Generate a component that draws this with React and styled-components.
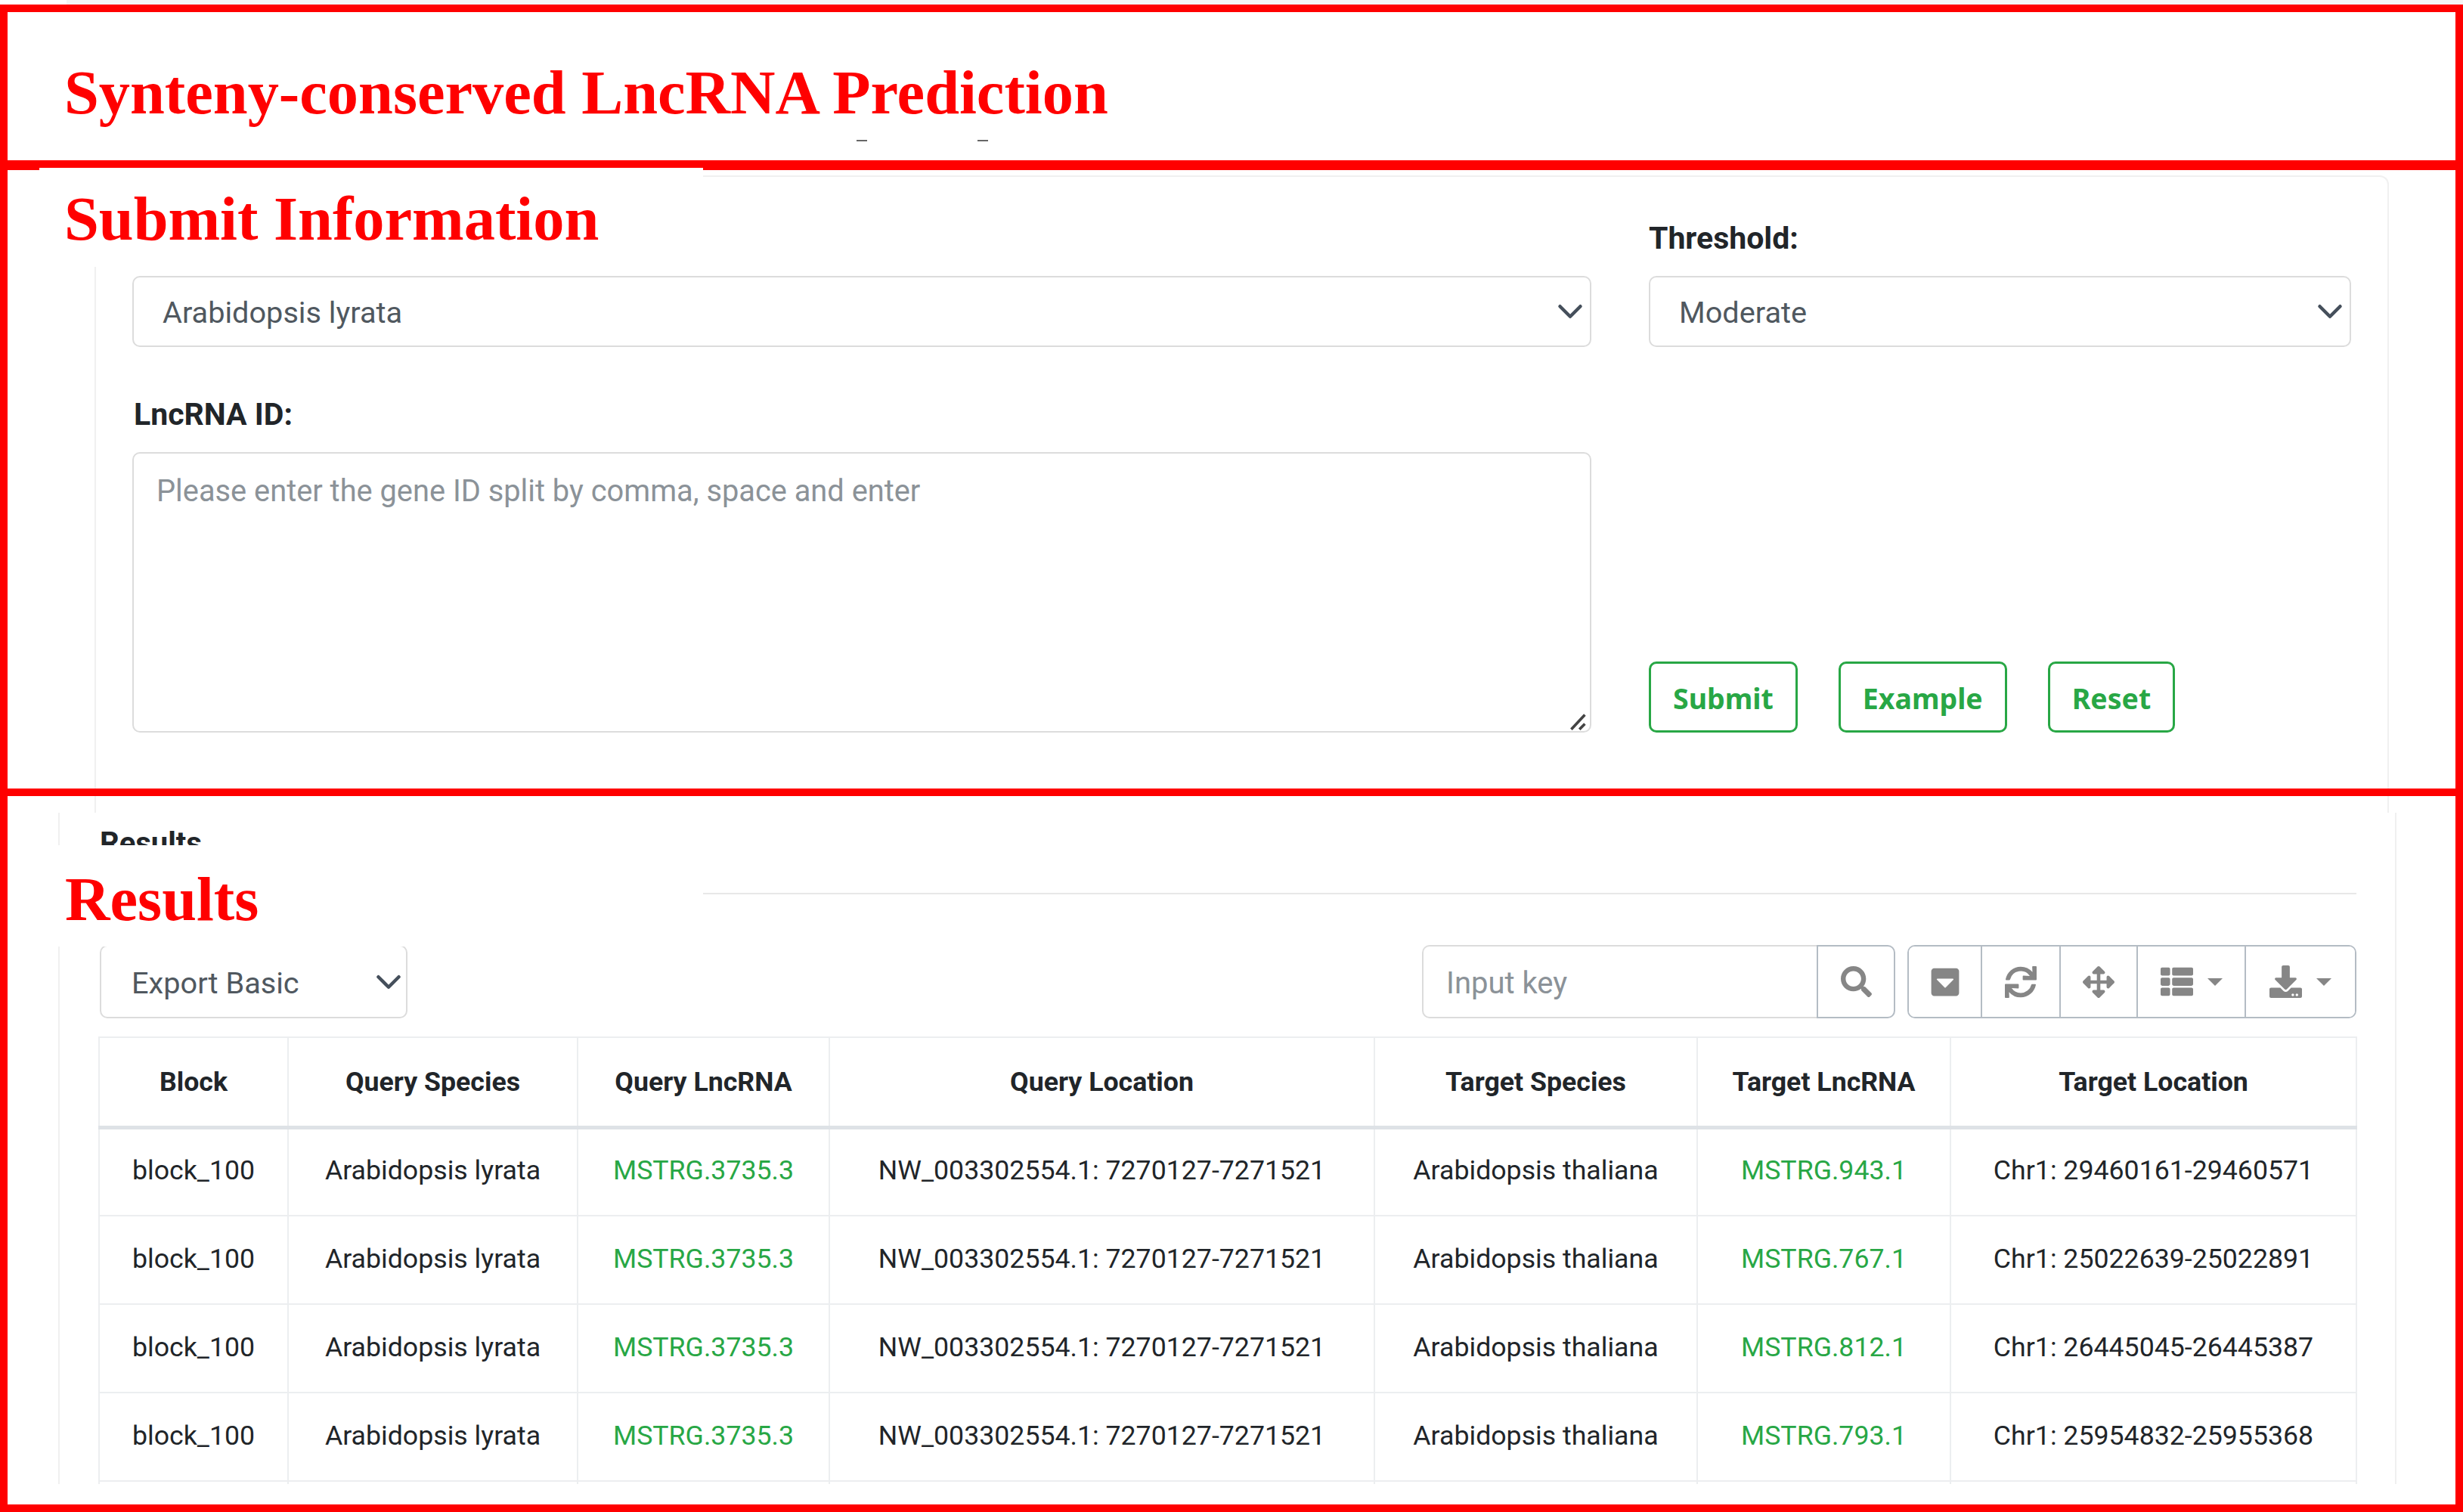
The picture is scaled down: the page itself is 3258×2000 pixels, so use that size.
import styled, { createGlobalStyle } from "styled-components";
import { FaSearch, FaCaretSquareDown, FaSync, FaArrowsAlt, FaThList, FaDownload } from "react-icons/fa";

const GlobalStyle = createGlobalStyle`
    html, body {
        margin: 0;
        padding: 0;
        background: #fff;
    }
    * {
        box-sizing: border-box;
    }
`;

const chevron = `url("data:image/svg+xml,%3csvg xmlns='http://www.w3.org/2000/svg' viewBox='0 0 16 16'%3e%3cpath fill='none' stroke='%23454f5b' stroke-linecap='round' stroke-linejoin='round' stroke-width='2' d='M2 5l6 6 6-6'/%3e%3c/svg%3e")`;

const rows = [
    ["MSTRG.943.1", "Chr1: 29460161-29460571"],
    ["MSTRG.767.1", "Chr1: 25022639-25022891"],
    ["MSTRG.812.1", "Chr1: 26445045-26445387"],
    ["MSTRG.793.1", "Chr1: 25954832-25955368"],
];

const columns = [
    ["Block", 250],
    ["Query Species", 383],
    ["Query LncRNA", 333],
    ["Query Location", 721],
    ["Target Species", 427],
    ["Target LncRNA", 335],
    ["Target Location", 537],
];

function App() {
    return (
        <Page>
            <GlobalStyle />
            <TopStrip />
            <Banner>
                <Title>Synteny-conserved LncRNA Prediction</Title>
                <Dash $left={1133} />
                <Dash $left={1293} />
            </Banner>

            <SubmitCard>
                <FormGrid>
                    <Select defaultValue="lyrata">
                        <option value="lyrata">Arabidopsis lyrata</option>
                    </Select>
                    <Field>
                        <Label>Threshold:</Label>
                        <Select defaultValue="moderate">
                            <option value="moderate">Moderate</option>
                        </Select>
                    </Field>
                    <Field>
                        <Label $indent={2}>LncRNA ID:</Label>
                        <TextareaWrap>
                            <Textarea placeholder="Please enter the gene ID split by comma, space and enter" />
                            <ResizeGrip viewBox="0 0 20 20">
                                <path d="M2 19 L17 3 M11 19 L17 13" />
                            </ResizeGrip>
                        </TextareaWrap>
                    </Field>
                    <Buttons>
                        <GreenButton>Submit</GreenButton>
                        <GreenButton>Example</GreenButton>
                        <GreenButton>Reset</GreenButton>
                    </Buttons>
                </FormGrid>
            </SubmitCard>

            <ResultsCard>
                <ResultsHead>Results</ResultsHead>
                <Toolbar>
                    <ExportSelect defaultValue="basic">
                        <option value="basic">Export Basic</option>
                    </ExportSelect>
                    <ToolbarRight>
                        <SearchGroup>
                            <SearchInput placeholder="Input key" />
                            <SearchButton><FaSearch size={41} /></SearchButton>
                        </SearchGroup>
                        <ToolGroup>
                            <ToolButton $w={97}><FaCaretSquareDown size={42} /></ToolButton>
                            <ToolButton $w={104}><FaSync size={42} /></ToolButton>
                            <ToolButton $w={102}><FaArrowsAlt size={42} /></ToolButton>
                            <ToolButton $w={143}><FaThList size={43} /><Caret /></ToolButton>
                            <ToolButton $w={144}><FaDownload size={43} /><Caret /></ToolButton>
                        </ToolGroup>
                    </ToolbarRight>
                </Toolbar>
                <TableClip>
                    <Table>
                        <colgroup>
                            {columns.map(([name, width]) => <col key={name} width={width} />)}
                        </colgroup>
                        <thead>
                            <tr>
                                {columns.map(([name]) => <Th key={name}>{name}</Th>)}
                            </tr>
                        </thead>
                        <tbody>
                            {rows.map(([lnc, location]) => (
                                <tr key={lnc}>
                                    <Td>block_100</Td>
                                    <Td>Arabidopsis lyrata</Td>
                                    <Td><GeneLink>MSTRG.3735.3</GeneLink></Td>
                                    <Td>NW_003302554.1: 7270127-7271521</Td>
                                    <Td>Arabidopsis thaliana</Td>
                                    <Td><GeneLink>{lnc}</GeneLink></Td>
                                    <Td>{location}</Td>
                                </tr>
                            ))}
                            {/* next row is cut off by the crop, only its borders show */}
                            <tr>
                                {columns.map(([name]) => <Td key={name} />)}
                            </tr>
                        </tbody>
                    </Table>
                </TableClip>
            </ResultsCard>

            <Frame $top={6} $height={216} />
            <Frame $top={215} $height={838} />
            <Frame $top={1043} $height={957} />
            <Cover $top={222} $left={52} $width={878} $height={131} $pad={33} $titleTop={20}>
                <Title>Submit Information</Title>
            </Cover>
            <Cover $top={1118} $left={10} $width={920} $height={134} $pad={76} $titleTop={24}>
                <Title>Results</Title>
            </Cover>
        </Page>
    );
}

export default App;

const Page = styled.div`
    position: relative;
    width: 3258px;
    height: 2000px;
    overflow: hidden;
    background: #fff;
    font-family: Roboto, "Liberation Sans", sans-serif;
    color: #212529;
`;

const TopStrip = styled.div`
    height: 6px;
    margin-left: 88px;
    background: #f4f4f4;
`;

const Banner = styled.header`
    position: relative;
    height: 226px;
    padding: 69px 0 0 85px;
`;

const Title = styled.h1`
    margin: 0;
    font-family: "Liberation Serif", "Times New Roman", serif;
    font-size: 82.4px;
    line-height: 96px;
    font-weight: 700;
    color: #f00;
    white-space: nowrap;
`;

const Dash = styled.span`
    position: absolute;
    top: 179px;
    left: ${(p) => p.$left}px;
    width: 14px;
    height: 2px;
    background: #666;
`;

const SubmitCard = styled.section`
    width: 3035px;
    height: 843px;
    margin-left: 125px;
    padding: 57px 0 0 48px;
    background: #fff;
    border: 2px solid #f0f0f0;
    border-bottom: none;
    border-radius: 12px 12px 0 0;
`;

const FormGrid = styled.div`
    display: grid;
    grid-template-columns: 1930px 929px;
    column-gap: 76px;
    row-gap: 65px;
    align-items: end;
`;

const Field = styled.div`
    display: flex;
    flex-direction: column;
    gap: 26px;
`;

const Label = styled.label`
    padding-left: ${(p) => p.$indent || 0}px;
    font-size: 41px;
    line-height: 48px;
    font-weight: 700;
    color: #212529;
`;

const Select = styled.select`
    appearance: none;
    width: 100%;
    height: 94px;
    padding: 2px 60px 0 38px;
    font-family: inherit;
    font-size: 39.7px;
    color: #50585f;
    background: #fff ${chevron} no-repeat right 8px center / 36px 36px;
    border: 2px solid #dcdcdc;
    border-radius: 10px;
`;

const TextareaWrap = styled.div`
    position: relative;
    height: 371px;
`;

const Textarea = styled.textarea`
    display: block;
    width: 100%;
    height: 100%;
    padding: 26px 30px;
    resize: none;
    font-family: inherit;
    font-size: 39.8px;
    line-height: 48px;
    color: #495057;
    background: #fff;
    border: 2px solid #dcdcdc;
    border-radius: 10px;

    &::placeholder {
        color: #8b9298;
        opacity: 1;
    }
`;

const ResizeGrip = styled.svg`
    position: absolute;
    right: 5px;
    bottom: 3px;
    width: 24px;
    height: 24px;

    path {
        fill: none;
        stroke: #444;
        stroke-width: 3;
    }
`;

const Buttons = styled.div`
    display: flex;
    gap: 54px;
`;

const GreenButton = styled.button`
    height: 94px;
    padding: 3px 29px 0;
    font-family: "Noto Sans", "Open Sans", sans-serif;
    font-size: 37.5px;
    font-weight: 700;
    color: #28a745;
    background: #fff;
    border: 3px solid #28a745;
    border-radius: 10px;
`;

const ResultsCard = styled.section`
    width: 3093px;
    height: 888px;
    margin-left: 77px;
    padding: 17px 51px 0 53px;
    background: #fff;
    border-left: 2px solid #f0f0f0;
    border-right: 2px solid #f0f0f0;
`;

const ResultsHead = styled.div`
    height: 91px;
    font-size: 40px;
    line-height: 48px;
    font-weight: 700;
    border-bottom: 2px solid #e8e8e8;
`;

const Toolbar = styled.div`
    display: flex;
    justify-content: space-between;
    align-items: center;
    height: 97px;
    margin-top: 67px;
    margin-bottom: 24px;
`;

/* its top border sits under the white cover of the Results title */
const ExportSelect = styled(Select)`
    width: 407px;
    height: 97px;
    padding: 4px 60px 0 40px;
    background-position: right 5px center;
`;

const ToolbarRight = styled.div`
    display: flex;
    gap: 16px;
`;

const SearchGroup = styled.div`
    display: flex;
    height: 97px;
`;

const SearchInput = styled.input`
    width: 522px;
    height: 100%;
    padding: 4px 30px 0;
    font-family: inherit;
    font-size: 40px;
    color: #495057;
    border: 2px solid #dcdcdc;
    border-right: none;
    border-radius: 10px 0 0 10px;
    outline: none;

    &::placeholder {
        color: #8b9298;
        opacity: 1;
    }
`;

const SearchButton = styled.button`
    display: flex;
    align-items: center;
    justify-content: center;
    width: 104px;
    padding: 0;
    color: #868686;
    background: #fff;
    border: 2px solid #b4bcc4;
    border-radius: 0 10px 10px 0;
`;

const ToolGroup = styled.div`
    display: flex;
    height: 97px;
    border: 2px solid #b4bcc4;
    border-radius: 10px;
    overflow: hidden;
`;

const ToolButton = styled.button`
    display: flex;
    align-items: center;
    justify-content: center;
    gap: 19px;
    width: ${(p) => p.$w}px;
    padding: 0;
    color: #868686;
    background: #fff;
    border: none;
    border-right: 2px solid #b4bcc4;

    &:last-child {
        border-right: none;
    }
`;

const Caret = styled.span`
    width: 0;
    height: 0;
    border-left: 10px solid transparent;
    border-right: 10px solid transparent;
    border-top: 10px solid #868686;
`;

const TableClip = styled.div`
    width: 2989px;
    height: 592px;
    margin-left: -2px;
    overflow: hidden;
`;

const Table = styled.table`
    width: 2988px;
    table-layout: fixed;
    border-collapse: collapse;
    font-size: 35.7px;
`;

const Th = styled.th`
    height: 119px;
    padding: 0;
    text-align: center;
    font-weight: 700;
    color: #212529;
    border: 2px solid #eceef0;
    border-bottom: 5px solid #dee2e6;
`;

const Td = styled.td`
    height: 117px;
    padding: 0 0 4px;
    text-align: center;
    color: #212529;
    border: 2px solid #eceef0;
`;

const GeneLink = styled.a`
    color: #28a745;
`;

const Frame = styled.div`
    position: absolute;
    top: ${(p) => p.$top}px;
    left: 0;
    width: 3258px;
    height: ${(p) => p.$height}px;
    border: 10px solid #f00;
    pointer-events: none;
`;

const Cover = styled.div`
    position: absolute;
    top: ${(p) => p.$top}px;
    left: ${(p) => p.$left}px;
    width: ${(p) => p.$width}px;
    height: ${(p) => p.$height}px;
    padding: ${(p) => p.$titleTop}px 0 0 ${(p) => p.$pad}px;
    background: #fff;
`;
